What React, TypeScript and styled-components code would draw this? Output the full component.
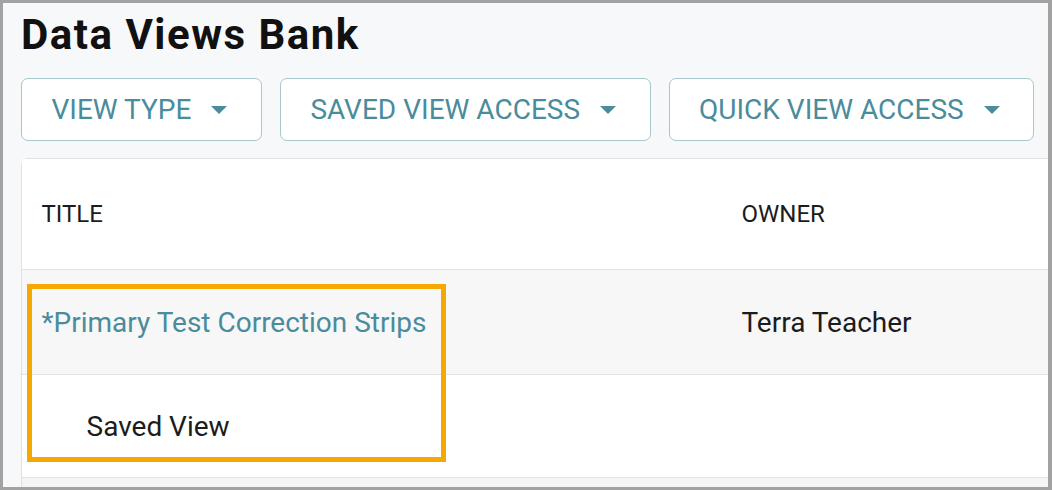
import React from "react";
import styled, { createGlobalStyle } from "styled-components";

const Global = createGlobalStyle`
  html, body { margin: 0; padding: 0; }
  body { font-family: Roboto, "Liberation Sans", Arial, sans-serif; background: #ffffff; }
  * { box-sizing: border-box; }
`;

const Frame = styled.div`
  position: relative;
  width: 1052px;
  height: 490px;
  border: 3px solid #a2a2a2;
  border-right-width: 4px;
  background: #f6f8fa;
  overflow: hidden;
  padding: 8px 0 0 18px;
  display: flex;
  flex-direction: column;
`;

const Title = styled.h1`
  margin: 0;
  font-family: Roboto, "Liberation Sans", Arial, sans-serif;
  font-size: 42px;
  line-height: 48px;
  font-weight: 700;
  color: #111111;
  letter-spacing: 1.5px;
`;

const Toolbar = styled.div`
  display: flex;
  gap: 18px;
  margin-top: 19px;
`;

const FilterButton = styled.button`
  flex: none;
  display: flex;
  align-items: center;
  gap: 20px;
  height: 63px;
  padding: 0 33.5px 0 29.5px;
  background: #ffffff;
  border: 1.5px solid #a7c7cd;
  border-radius: 7px;
  color: #4a8c9b;
  font-family: Roboto, "Liberation Sans", Arial, sans-serif;
  font-size: 28px;
  font-weight: 400;
  letter-spacing: 0;
  text-transform: uppercase;
  white-space: nowrap;
  cursor: pointer;
`;

const Caret = styled.svg`
  width: 16px;
  height: 8px;
  flex: none;
`;

const Card = styled.div`
  margin-top: 17px;
  margin-right: -40px;
  flex: 1;
  background: #ffffff;
  border: 1.5px solid #e1e1e1;
  border-bottom: none;
  border-radius: 7px 7px 0 0;
  display: flex;
  flex-direction: column;
`;

const Row = styled.div<{ $height: number; $bg?: string }>`
  display: grid;
  grid-template-columns: 700px 1fr;
  height: ${(p) => p.$height}px;
  background: ${(p) => p.$bg || "#ffffff"};
  border-bottom: 1.5px solid #e2e2e2;
  flex: none;
`;

const Filler = styled.div`
  flex: 1;
  background: #f5f5f5;
`;

const Cell = styled.div<{ $indent?: number; $size?: number; $color?: string }>`
  display: flex;
  align-items: center;
  padding-left: ${(p) => p.$indent ?? 19.5}px;
  font-size: ${(p) => p.$size ?? 28}px;
  color: ${(p) => p.$color || "#1c1c1c"};
  white-space: nowrap;
`;

const Highlight = styled.div`
  position: absolute;
  left: 24px;
  top: 281px;
  width: 419px;
  height: 178px;
  border: 5px solid #f5a900;
  pointer-events: none;
`;

const CaretIcon = () => (
  <Caret viewBox="0 0 16 8">
    <path d="M0 0 L16 0 L8 8 Z" fill="#4a8c9b" />
  </Caret>
);

const filters = ["View Type", "Saved View Access", "Quick View Access"];

export default function App() {
  return (
    <>
      <Global />
      <Frame>
        <Title>Data Views Bank</Title>
        <Toolbar>
          {filters.map((f) => (
            <FilterButton key={f}>
              <span>{f}</span>
              <CaretIcon />
            </FilterButton>
          ))}
        </Toolbar>
        <Card>
          <Row $height={111}>
            <Cell $size={24}>TITLE</Cell>
            <Cell $size={24}>OWNER</Cell>
          </Row>
          <Row $height={105} $bg="#f7f7f7">
            <Cell $color="#4a8c9b">*Primary Test Correction Strips</Cell>
            <Cell>Terra Teacher</Cell>
          </Row>
          <Row $height={103}>
            <Cell $indent={64.5}>Saved View</Cell>
            <Cell />
          </Row>
          <Filler />
        </Card>
        <Highlight />
      </Frame>
    </>
  );
}
